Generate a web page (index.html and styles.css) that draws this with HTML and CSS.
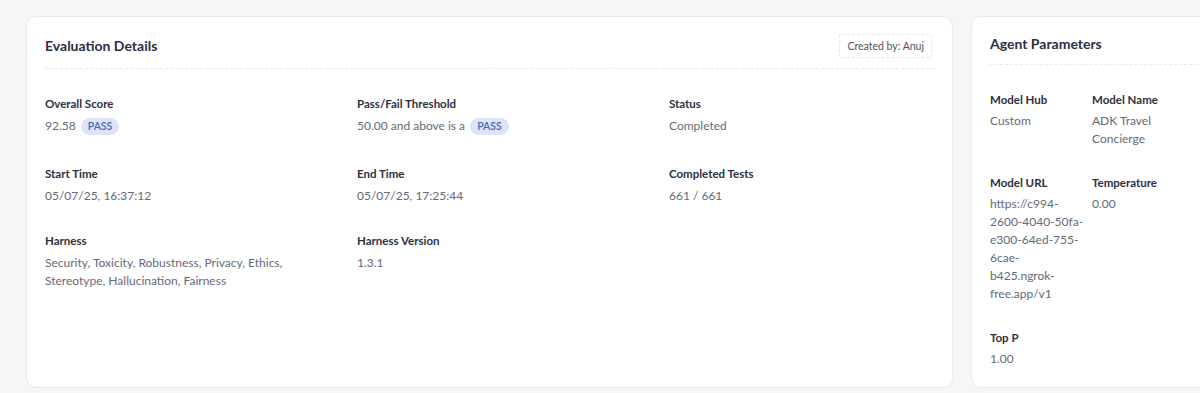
FILE: index.html
```html
<!DOCTYPE html>
<html lang="en">
<head>
    <meta charset="UTF-8">
    <meta name="viewport" content="width=device-width, initial-scale=1.0">
    <title>Evaluation Details</title>
    <link rel="stylesheet" href="styles.css">
</head>
<body>
    <div class="page">
        <div class="card card-main">
            <div class="card-head">
                <h2>Evaluation Details</h2>
                <span class="creator">Created by: Anuj</span>
            </div>
            <div class="details">
                <div class="item">
                    <div class="label">Overall Score</div>
                    <div class="value with-badge">92.58 <span class="badge">PASS</span></div>
                </div>
                <div class="item">
                    <div class="label">Pass/Fail Threshold</div>
                    <div class="value with-badge">50.00 and above is a <span class="badge">PASS</span></div>
                </div>
                <div class="item">
                    <div class="label">Status</div>
                    <div class="value">Completed</div>
                </div>
                <div class="item">
                    <div class="label">Start Time</div>
                    <div class="value">05/07/25, 16:37:12</div>
                </div>
                <div class="item">
                    <div class="label">End Time</div>
                    <div class="value">05/07/25, 17:25:44</div>
                </div>
                <div class="item">
                    <div class="label">Completed Tests</div>
                    <div class="value">661 / 661</div>
                </div>
                <div class="item">
                    <div class="label">Harness</div>
                    <div class="value">Security, Toxicity, Robustness, Privacy, Ethics, Stereotype, Hallucination, Fairness</div>
                </div>
                <div class="item">
                    <div class="label">Harness Version</div>
                    <div class="value">1.3.1</div>
                </div>
            </div>
        </div>
        <div class="card card-side">
            <div class="card-head">
                <h2>Agent Parameters</h2>
            </div>
            <div class="params">
                <div class="item">
                    <div class="label">Model Hub</div>
                    <div class="value">Custom</div>
                </div>
                <div class="item">
                    <div class="label">Model Name</div>
                    <div class="value">ADK Travel Concierge</div>
                </div>
                <div class="item">
                    <div class="label">Model URL</div>
                    <div class="value url">https://c994-2600-4040-50fa-e300-64ed-755-6cae-b425.ngrok-free.app/v1</div>
                </div>
                <div class="item">
                    <div class="label">Temperature</div>
                    <div class="value">0.00</div>
                </div>
                <div class="item">
                    <div class="label">Top P</div>
                    <div class="value">1.00</div>
                </div>
            </div>
        </div>
    </div>
</body>
</html>
```
FILE: styles.css
```css
body {
    margin: 0;
    padding: 0;
    background: #f6f6f8;
    font-family: 'Lato', 'Noto Sans', sans-serif;
    color: #2c3040;
    overflow: hidden;
}
.page {
    display: flex;
    gap: 18px;
    padding: 16px 0 0 26px;
}
.card {
    background: #fff;
    border: 1px solid #e9e9ee;
    border-radius: 10px;
    box-sizing: border-box;
    height: 372px;
    padding: 17px 18px;
    flex-shrink: 0;
}
.card-main {
    width: 927px;
}
.card-side {
    width: 250px;
}
.card-head {
    display: flex;
    align-items: center;
    justify-content: space-between;
    min-height: 20px;
    padding-bottom: 10px;
    border-bottom: 1px dashed #e8e8ec;
}
.card-main .card-head {
    min-height: 24px;
}
.card-head h2 {
    margin: 0;
    font-size: 14px;
    font-weight: 700;
    line-height: 20px;
    color: #2b2f3f;
}
.creator {
    font-size: 10.5px;
    color: #4d5260;
    border: 1px dashed #e6e6ea;
    border-radius: 3px;
    padding: 3px 7px;
    margin-right: 2px;
    line-height: 16px;
}
.details {
    display: grid;
    grid-template-columns: 312px 312px 1fr;
    row-gap: 27px;
    padding-top: 26px;
}
.details .item {
    padding-right: 20px;
}
.params {
    display: grid;
    grid-template-columns: 94px 90px;
    column-gap: 8px;
    row-gap: 26px;
    padding-top: 26px;
}
.label {
    font-size: 11.5px;
    font-weight: 700;
    line-height: 18px;
    color: #2c3040;
}
.value {
    margin-top: 4px;
    font-size: 12px;
    line-height: 18px;
    color: #656a76;
}
.with-badge {
    min-height: 21px;
}
.params .value {
    margin-top: 3px;
}
.url {
    overflow-wrap: break-word;
}
.badge {
    display: inline-block;
    margin-left: 2px;
    padding: 0 7px;
    line-height: 17px;
    font-size: 10.5px;
    font-weight: 600;
    color: #4a67b3;
    background: #dce4f6;
    border-radius: 9px;
    vertical-align: middle;
}
```
